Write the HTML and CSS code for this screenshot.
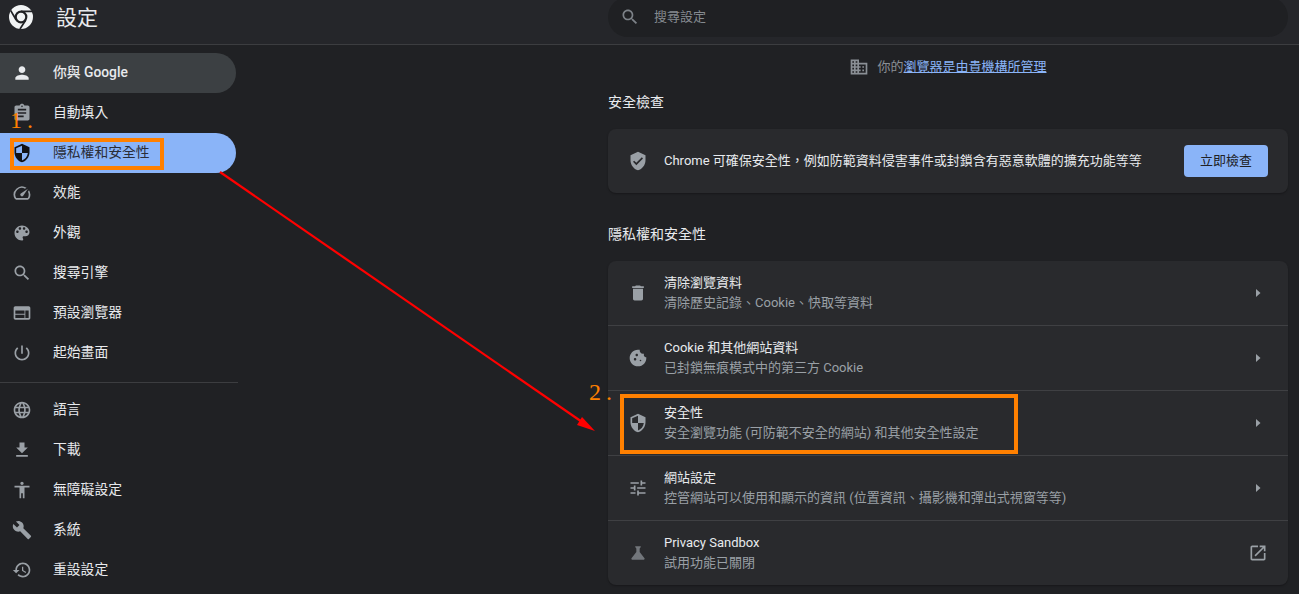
FILE: index.html
```html
<!DOCTYPE html>
<html lang="zh-Hant">
<head>
<meta charset="utf-8">
<title>設定</title>
<link rel="stylesheet" href="styles.css">
</head>
<body>
<header class="topbar">
  <div class="brand">
    <svg class="logo" viewBox="0 0 24 24"><circle cx="12" cy="12" r="12" fill="#f1f3f4"/><circle cx="12" cy="12" r="6.4" fill="#202124"/><circle cx="12" cy="12" r="4.200" fill="#f1f3f4"/><path d="M12 6.400H23.500M7.200 15 1.600 5.400M16.800 15 11 24" fill="none" stroke="#202124" stroke-width="1.700"/></svg>
    <h1 class="brand-title">設定</h1>
  </div>
  <div class="search">
    <svg class="icon" viewBox="0 0 24 24"><path d="M15.5 14h-.79l-.28-.27C15.41 12.59 16 11.11 16 9.5 16 5.91 13.09 3 9.5 3S3 5.91 3 9.5 5.91 16 9.5 16c1.61 0 3.09-.59 4.23-1.57l.27.28v.79l5 4.99L20.49 19l-4.99-5zm-6 0C7.01 14 5 11.99 5 9.5S7.01 5 9.5 5 14 7.01 14 9.5 11.99 14 9.5 14z"/></svg>
    <span>搜尋設定</span>
  </div>
</header>
<div class="layout">
  <nav class="sidebar">
    <a class="nav-item hover"><svg class="icon light" viewBox="0 0 24 24"><path d="M12 12c2.21 0 4-1.79 4-4s-1.79-4-4-4-4 1.79-4 4 1.79 4 4 4zm0 2c-2.67 0-8 1.34-8 4v2h16v-2c0-2.66-5.33-4-8-4z"/></svg><span class="strong">你與 Google</span></a>
    <a class="nav-item"><svg class="icon" viewBox="0 0 24 24"><path d="M19 3h-4.18C14.4 1.84 13.3 1 12 1s-2.4.84-2.82 2H5c-1.1 0-2 .9-2 2v14c0 1.1.9 2 2 2h14c1.1 0 2-.9 2-2V5c0-1.1-.9-2-2-2zm-7 0c.55 0 1 .45 1 1s-.45 1-1 1-1-.45-1-1 .45-1 1-1zm2 14H7v-2h7v2zm3-4H7v-2h10v2zm0-4H7V7h10v2z"/></svg><span>自動填入</span></a>
    <a class="nav-item active"><svg class="icon dark" viewBox="0 0 24 24"><path d="M12 1L3 5v6c0 5.55 3.84 10.74 9 12 5.16-1.26 9-6.45 9-12V5l-9-4zm0 10.99h7c-.53 4.12-3.28 7.79-7 8.94V12H5V6.3l7-3.11v8.8z"/></svg><span>隱私權和安全性</span></a>
    <a class="nav-item"><svg class="icon" viewBox="0 0 24 24"><path d="M20.38 8.57l-1.23 1.85a8 8 0 0 1-.22 7.58H5.07A8 8 0 0 1 15.58 6.85l1.85-1.23A10 10 0 0 0 3.35 19a2 2 0 0 0 1.72 1h13.85a2 2 0 0 0 1.74-1 10 10 0 0 0-.27-10.44zm-9.79 6.84a2 2 0 0 0 2.83 0l5.66-8.49-8.49 5.66a2 2 0 0 0 0 2.83z"/></svg><span>效能</span></a>
    <a class="nav-item"><svg class="icon" viewBox="0 0 24 24"><path d="M12 3c-4.97 0-9 4.03-9 9s4.03 9 9 9c.83 0 1.5-.67 1.5-1.5 0-.39-.15-.74-.39-1.01-.23-.26-.38-.61-.38-.99 0-.83.67-1.5 1.5-1.5H16c2.76 0 5-2.24 5-5 0-4.42-4.03-8-9-8zm-5.5 9c-.83 0-1.5-.67-1.5-1.5S5.67 9 6.5 9 8 9.67 8 10.5 7.33 12 6.5 12zm3-4C8.67 8 8 7.33 8 6.5S8.67 5 9.5 5s1.5.67 1.5 1.5S10.33 8 9.5 8zm5 0c-.83 0-1.5-.67-1.5-1.5S13.67 5 14.5 5s1.5.67 1.5 1.5S15.33 8 14.5 8zm3 4c-.83 0-1.5-.67-1.5-1.5S16.67 9 17.5 9s1.5.67 1.5 1.5-.67 1.5-1.5 1.5z"/></svg><span>外觀</span></a>
    <a class="nav-item"><svg class="icon" viewBox="0 0 24 24"><path d="M15.5 14h-.79l-.28-.27C15.41 12.59 16 11.11 16 9.5 16 5.91 13.09 3 9.5 3S3 5.91 3 9.5 5.91 16 9.5 16c1.61 0 3.09-.59 4.23-1.57l.27.28v.79l5 4.99L20.49 19l-4.99-5zm-6 0C7.01 14 5 11.99 5 9.5S7.01 5 9.5 5 14 7.01 14 9.5 11.99 14 9.5 14z"/></svg><span>搜尋引擎</span></a>
    <a class="nav-item"><svg class="icon" viewBox="0 0 24 24"><path d="M20 4H4c-1.1 0-1.99.9-1.99 2L2 18c0 1.1.9 2 2 2h16c1.1 0 2-.9 2-2V6c0-1.1-.9-2-2-2zm-5 14H4v-4h11v4zm0-5H4V9h11v4zm5 5h-4V9h4v9z"/></svg><span>預設瀏覽器</span></a>
    <a class="nav-item"><svg class="icon" viewBox="0 0 24 24"><path d="M13 3h-2v10h2V3zm4.83 2.17l-1.42 1.42C17.99 7.86 19 9.81 19 12c0 3.87-3.13 7-7 7s-7-3.13-7-7c0-2.19 1.01-4.14 2.58-5.42L6.17 5.17C4.23 6.82 3 9.26 3 12c0 4.97 4.03 9 9 9s9-4.03 9-9c0-2.74-1.23-5.18-3.17-6.83z"/></svg><span>起始畫面</span></a>
    <div class="nav-divider"></div>
    <a class="nav-item"><svg class="icon" viewBox="0 0 24 24"><path d="M11.99 2C6.47 2 2 6.48 2 12s4.47 10 9.99 10C17.52 22 22 17.52 22 12S17.52 2 11.99 2zm6.93 6h-2.95c-.32-1.25-.78-2.45-1.38-3.56 1.84.63 3.37 1.91 4.33 3.56zM12 4.04c.83 1.2 1.48 2.53 1.91 3.96h-3.82c.43-1.43 1.08-2.76 1.91-3.96zM4.26 14C4.1 13.36 4 12.69 4 12s.1-1.36.26-2h3.38c-.08.66-.14 1.32-.14 2 0 .68.06 1.34.14 2H4.26zm.82 2h2.95c.32 1.25.78 2.45 1.38 3.56-1.84-.63-3.37-1.9-4.33-3.56zm2.95-8H5.08c.96-1.66 2.49-2.93 4.33-3.56C8.81 5.55 8.35 6.75 8.03 8zM12 19.96c-.83-1.2-1.48-2.53-1.91-3.96h3.82c-.43 1.43-1.08 2.76-1.91 3.96zM14.34 14H9.66c-.09-.66-.16-1.32-.16-2 0-.68.07-1.35.16-2h4.68c.09.65.16 1.32.16 2 0 .68-.07 1.34-.16 2zm.25 5.56c.6-1.11 1.06-2.31 1.38-3.56h2.95c-.96 1.65-2.49 2.93-4.33 3.56zM16.36 14c.08-.66.14-1.32.14-2 0-.68-.06-1.34-.14-2h3.38c.16.64.26 1.31.26 2s-.1 1.36-.26 2h-3.38z"/></svg><span>語言</span></a>
    <a class="nav-item"><svg class="icon" viewBox="0 0 24 24"><path d="M19 9h-4V3H9v6H5l7 7 7-7zM5 18v2h14v-2H5z"/></svg><span>下載</span></a>
    <a class="nav-item"><svg class="icon" viewBox="0 0 24 24"><path d="M12 2c1.1 0 2 .9 2 2s-.9 2-2 2-2-.9-2-2 .9-2 2-2zm9 7h-6v13h-2v-6h-2v6H9V9H3V7h18v2z"/></svg><span>無障礙設定</span></a>
    <a class="nav-item"><svg class="icon" viewBox="0 0 24 24"><path d="M22.7 19l-9.1-9.1c.9-2.3.4-5-1.5-6.9-2-2-5-2.4-7.4-1.3L9 6 6 9 1.6 4.7C.4 7.1.9 10.1 2.9 12.1c1.9 1.9 4.6 2.4 6.9 1.5l9.1 9.1c.4.4 1 .4 1.4 0l2.3-2.3c.5-.4.5-1.1.1-1.4z"/></svg><span>系統</span></a>
    <a class="nav-item"><svg class="icon" viewBox="0 0 24 24"><path d="M13 3c-4.97 0-9 4.03-9 9H1l3.89 3.89.07.14L9 12H6c0-3.87 3.13-7 7-7s7 3.13 7 7-3.13 7-7 7c-1.93 0-3.68-.79-4.94-2.06l-1.42 1.42C8.27 19.99 10.51 21 13 21c4.97 0 9-4.03 9-9s-4.03-9-9-9zm-1 5v5l4.28 2.54.72-1.21-3.5-2.08V8H12z"/></svg><span>重設設定</span></a>
  </nav>
  <main class="content">
    <div class="managed">
      <svg class="icon" viewBox="0 0 24 24"><path d="M12 7V3H2v18h20V7H12zM6 19H4v-2h2v2zm0-4H4v-2h2v2zm0-4H4V9h2v2zm0-4H4V5h2v2zm4 12H8v-2h2v2zm0-4H8v-2h2v2zm0-4H8V9h2v2zm0-4H8V5h2v2zm10 12h-8v-2h2v-2h-2v-2h2v-2h-2V9h8v10zm-2-8h-2v2h2v-2zm0 4h-2v2h2v-2z"/></svg>
      <span>你的<a class="link">瀏覽器是由貴機構所管理</a></span>
    </div>
    <h2 class="section-title first">安全檢查</h2>
    <section class="card check">
      <svg class="icon" viewBox="0 0 24 24"><path d="M12 1L3 5v6c0 5.55 3.84 10.74 9 12 5.16-1.26 9-6.45 9-12V5l-9-4zm-2 16l-4-4 1.41-1.41L10 14.17l6.59-6.59L18 9l-8 8z"/></svg>
      <span class="check-text">Chrome 可確保安全性，例如防範資料侵害事件或封鎖含有惡意軟體的擴充功能等等</span>
      <button class="btn">立即檢查</button>
    </section>
    <h2 class="section-title second">隱私權和安全性</h2>
    <section class="card">
      <div class="row">
        <svg class="icon" viewBox="0 0 24 24"><path d="M6 19c0 1.1.9 2 2 2h8c1.1 0 2-.9 2-2V7H6v12zM19 4h-3.5l-1-1h-5l-1 1H5v2h14V4z"/></svg>
        <div class="row-text"><div class="row-title">清除瀏覽資料</div><div class="row-sub">清除歷史記錄、Cookie、快取等資料</div></div>
        <svg class="icon arrow" viewBox="0 0 20 20"><path d="M8 6l4.500 4-4.500 4z"/></svg>
      </div>
      <div class="row">
        <svg class="icon" viewBox="0 0 24 24"><path d="M21.95 10.99c-1.79-.03-3.7-1.95-2.68-4.22-2.97 1-5.78-1.59-5.19-4.56C7.11.74 2 6.41 2 12c0 5.52 4.48 10 10 10 5.890 0 10.540-5.080 9.950-11.010zM8.500 15C7.670 15 7 14.330 7 13.500S7.670 12 8.500 12s1.500.67 1.500 1.500S9.330 15 8.500 15zm2-5C9.670 10 9 9.330 9 8.500S9.670 7 10.500 7s1.500.67 1.500 1.500-.67 1.500-1.500 1.500zM15 16c-.55 0-1-.45-1-1s.45-1 1-1 1 .45 1 1-.45 1-1 1z"/></svg>
        <div class="row-text"><div class="row-title">Cookie 和其他網站資料</div><div class="row-sub">已封鎖無痕模式中的第三方 Cookie</div></div>
        <svg class="icon arrow" viewBox="0 0 20 20"><path d="M8 6l4.500 4-4.500 4z"/></svg>
      </div>
      <div class="row">
        <svg class="icon" viewBox="0 0 24 24"><path d="M12 1L3 5v6c0 5.55 3.84 10.74 9 12 5.16-1.26 9-6.45 9-12V5l-9-4zm0 10.99h7c-.53 4.12-3.28 7.79-7 8.94V12H5V6.3l7-3.11v8.8z"/></svg>
        <div class="row-text"><div class="row-title">安全性</div><div class="row-sub">安全瀏覽功能 (可防範不安全的網站) 和其他安全性設定</div></div>
        <svg class="icon arrow" viewBox="0 0 20 20"><path d="M8 6l4.500 4-4.500 4z"/></svg>
      </div>
      <div class="row">
        <svg class="icon" viewBox="0 0 24 24"><path d="M3 17v2h6v-2H3zM3 5v2h10V5H3zm10 16v-2h8v-2h-8v-2h-2v6h2zM7 9v2H3v2h4v2h2V9H7zm14 4v-2H11v2h10zm-6-4h2V7h4V5h-4V3h-2v6z"/></svg>
        <div class="row-text"><div class="row-title">網站設定</div><div class="row-sub">控管網站可以使用和顯示的資訊 (位置資訊、攝影機和彈出式視窗等等)</div></div>
        <svg class="icon arrow" viewBox="0 0 20 20"><path d="M8 6l4.500 4-4.500 4z"/></svg>
      </div>
      <div class="row">
        <svg class="icon flask" viewBox="0 0 24 24"><path d="M19.800 18.400L14 10.670V6.500l1.350-1.690c.26-.33.03-.81-.39-.81H9.040c-.42 0-.65.48-.39.81L10 6.500v4.170L4.200 18.400c-.49.66-.02 1.600.8 1.600h14c.82 0 1.290-.94.8-1.600z"/></svg>
        <div class="row-text"><div class="row-title">Privacy Sandbox</div><div class="row-sub">試用功能已關閉</div></div>
        <svg class="icon external" viewBox="0 0 24 24"><path d="M19 19H5V5h7V3H5c-1.110 0-2 .9-2 2v14c0 1.100.89 2 2 2h14c1.100 0 2-.9 2-2v-7h-2v7zM14 3v2h3.590l-9.830 9.830 1.410 1.410L19 6.410V10h2V3h-7z"/></svg>
      </div>
    </section>
  </main>
</div>
<div class="mark mark-nav"></div>
<div class="mark mark-row"></div>
<span class="step step-one">1.</span>
<span class="step step-two">2.</span>
<svg class="pointer" viewBox="0 0 1299 594"><path d="M220 172 585 424" fill="none" stroke="#ff0000" stroke-width="2.200"/><path d="M595 431 582 417 577 425z" fill="#ff0000"/></svg>
</body>
</html>
```

FILE: styles.css
```css
* { box-sizing: border-box; }
html, body { margin: 0; height: 100%; }
body {
  background: #202124;
  color: #e8eaed;
  font: 13px/20px Roboto, "Noto Sans CJK TC", sans-serif;
  overflow: hidden;
  position: relative;
}
.icon { width: 20px; height: 20px; flex: none; fill: #9aa0a6; display: block; }
.icon.light { fill: #e8eaed; }
.icon.dark { fill: #111216; }
.icon.flask { fill: #72767b; }

.topbar {
  display: flex;
  height: 45px;
  border-bottom: 1px solid #3c3d40;
  background: #25262a;
}
.brand { width: 608px; display: flex; align-items: flex-start; padding: 5px 0 0 9px; }
.logo { width: 24px; height: 24px; flex: none; }
.brand-title { margin: 0 0 0 23px; font-size: 21px; line-height: 26px; font-weight: 400; }
.search {
  width: 680px;
  height: 40px;
  margin-top: -3px;
  border-radius: 20px;
  background: #1f2023;
  display: flex;
  align-items: center;
  gap: 14px;
  padding-left: 12px;
  padding-bottom: 1px;
  color: #858a90;
}
.search .icon { fill: #7d8288; }

.layout { display: flex; }
.sidebar { width: 238px; flex: none; padding-top: 8px; font-size: 13.8px; }
.nav-item {
  width: 236px;
  height: 40px;
  display: flex;
  align-items: center;
  gap: 21px;
  padding-left: 12px;
  border-radius: 0 20px 20px 0;
  color: #e8eaed;
}
.nav-item span { margin-bottom: 2px; }
.nav-item.hover { background: #3c4043; }
.nav-item.active { background: #8ab4f8; color: #2a2e38; }
.strong { font-weight: 500; }
.nav-divider { height: 1px; margin: 9px 0 7px; background: #3c3d40; }

.content { width: 680px; margin-left: 370px; }
.managed {
  display: flex;
  align-items: center;
  justify-content: center;
  gap: 8px;
  margin-top: 12px;
  color: #8a8f95;
}
.managed .icon { fill: #8a8f95; }
.link { color: #8ab4f8; text-decoration: underline; }
.section-title { margin: 0; font-size: 14px; line-height: 20px; font-weight: 400; }
.section-title.first { margin: 15px 0 17px; }
.section-title.second { margin: 31px 0 17px; }
.card {
  background: #292a2d;
  border-radius: 8px;
  box-shadow: 0 1px 2px rgba(0, 0, 0, .3);
}
.check { height: 64px; display: flex; align-items: center; padding: 0 20px; gap: 16px; }
.check-text { flex: 1; }
.btn {
  width: 84px;
  height: 32px;
  border: 0;
  border-radius: 4px;
  background: #8ab4f8;
  color: #202124;
  font: inherit;
  padding: 0;
}
.row {
  height: 65px;
  display: flex;
  align-items: center;
  gap: 16px;
  padding: 0 20px;
  border-top: 1px solid #3f4043;
}
.row:first-child { border-top: 0; height: 64px; }
.row-text { flex: 1; }
.row-sub { color: #9aa0a6; }
.external { fill: #9aa0a6; }

.mark { position: absolute; border: 4px solid #ff8000; }
.mark-nav { left: 10px; top: 138px; width: 154px; height: 32px; }
.mark-row { left: 620px; top: 394px; width: 398px; height: 60px; }
.step {
  position: absolute;
  color: #ff8000;
  font: 24px/24px "Liberation Serif", serif;
  letter-spacing: 5px;
}
.step-one { left: 10px; top: 108px; }
.step-two { left: 589px; top: 380px; }
.pointer { position: absolute; left: 0; top: 0; width: 1299px; height: 594px; pointer-events: none; }
```
